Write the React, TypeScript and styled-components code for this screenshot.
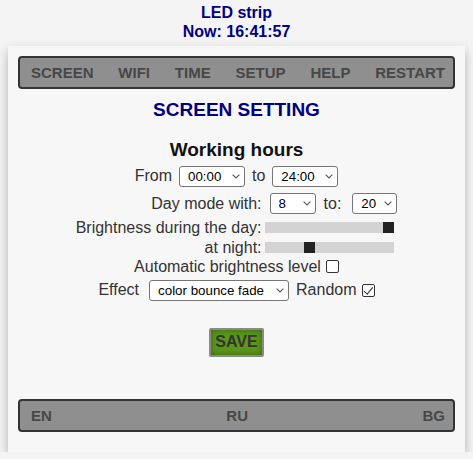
import styled, { createGlobalStyle } from "styled-components";

const GlobalStyle = createGlobalStyle`
  html, body {
    margin: 0;
    background: #f4f4f4;
  }
  body {
    padding: 3px 8px 0;
    font-family: "Liberation Sans", Arial, sans-serif;
    color: #333;
  }
`;

const Header = styled.header`
  text-align: center;
  color: #000080;
  font-weight: bold;
  font-size: 16px;
  line-height: 19px;
  margin-bottom: 5px;
`;

const Card = styled.main`
  background: #f7f7f7;
  box-shadow: 0 5px 10px rgba(0, 0, 0, 0.28);
  padding: 10px 10px 20px;
  display: flex;
  flex-direction: column;
  align-items: stretch;
`;

const Bar = styled.nav`
  display: flex;
  justify-content: space-between;
  align-items: center;
  height: 33px;
  box-sizing: border-box;
  padding: 0 8px 0 11px;
  background: #8f8f8f;
  border: 2px solid #333;
  border-radius: 4px;
`;

const BarItem = styled.a`
  font-size: 15px;
  font-weight: bold;
  color: #474747;
  text-decoration: none;
`;

const PageTitle = styled.h2`
  margin: 10px 0 0;
  text-align: center;
  font-size: 19px;
  line-height: 22px;
  color: #000080;
`;

const SectionTitle = styled.h3`
  margin: 18px 0 0;
  text-align: center;
  font-size: 19px;
  line-height: 22px;
  color: #111;
`;

const Row = styled.div<{ $h: number }>`
  display: flex;
  justify-content: center;
  align-items: center;
  height: ${(p) => p.$h}px;
  font-size: 16px;
`;

const Text = styled.span<{ $l?: number; $r?: number }>`
  margin-left: ${(p) => p.$l ?? 0}px;
  margin-right: ${(p) => p.$r ?? 0}px;
`;

const Table = styled.div`
  display: grid;
  grid-template-columns: auto auto;
  grid-template-rows: 27px 21px 19px;
  column-gap: 3px;
  justify-content: center;
  margin-top: 2px;
  font-size: 16px;
`;

const Label = styled.span`
  display: flex;
  align-items: center;
  justify-content: flex-end;
`;

const Cell = styled.span<{ $indent?: number }>`
  display: flex;
  align-items: center;
  padding-left: ${(p) => p.$indent ?? 0}px;
`;

const SelectWrap = styled.span<{ $w: number }>`
  position: relative;
  display: inline-flex;
  width: ${(p) => p.$w}px;
  height: 21px;
`;

const NativeSelect = styled.select`
  -webkit-appearance: none;
  appearance: none;
  width: 100%;
  height: 100%;
  box-sizing: border-box;
  padding: 0 0 0 8px;
  margin: 0;
  font-family: "Liberation Sans", Arial, sans-serif;
  font-size: 13.33px;
  color: #000;
  background: #fff;
  border: 1px solid #767676;
  border-radius: 3px;
`;

const Chevron = styled.svg`
  position: absolute;
  right: 5px;
  top: 8px;
  width: 8px;
  height: 5px;
  pointer-events: none;
`;

const Select = ({ w, value }: { w: number; value: string }) => (
  <SelectWrap $w={w}>
    <NativeSelect defaultValue={value}>
      <option>{value}</option>
    </NativeSelect>
    <Chevron viewBox="0 0 8 5">
      <path d="M0.6 0.6 L4 4 L7.4 0.6" fill="none" stroke="#555" strokeWidth="1.1" />
    </Chevron>
  </SelectWrap>
);

const Slider = styled.input.attrs({ type: "range", min: 0, max: 255 })`
  -webkit-appearance: none;
  appearance: none;
  width: 129px;
  height: 11px;
  margin: 0;
  background: #d3d3d3;
  outline: none;
  &::-webkit-slider-thumb {
    -webkit-appearance: none;
    appearance: none;
    width: 11px;
    height: 11px;
    border: none;
    border-radius: 0;
    background: #222;
  }
`;

const Check = styled.input.attrs({ type: "checkbox" })`
  -webkit-appearance: none;
  appearance: none;
  position: relative;
  width: 13px;
  height: 13px;
  margin: 0 0 0 5px;
  box-sizing: border-box;
  border: 1px solid #333;
  border-radius: 2px;
  background: #fff;
  &:checked::after {
    content: "";
    position: absolute;
    left: 3.5px;
    top: 0px;
    width: 3.5px;
    height: 7.5px;
    border: solid #333;
    border-width: 0 1.3px 1.3px 0;
    transform: rotate(40deg);
  }
`;

const SaveButton = styled.button`
  align-self: center;
  margin-top: 24px;
  width: 55px;
  height: 29px;
  box-sizing: border-box;
  padding: 0;
  background: #5b9718;
  border: 2px solid #8a8a8a;
  border-radius: 2px;
  box-shadow: inset 0 0 6px rgba(0, 0, 0, 0.35);
  font-family: "Liberation Sans", Arial, sans-serif;
  font-size: 16px;
  font-weight: bold;
  color: #333;
`;

const Footer = styled(Bar)`
  margin-top: 42px;
`;

const menu = ["SCREEN", "WIFI", "TIME", "SETUP", "HELP", "RESTART"];
const langs = ["EN", "RU", "BG"];

export default function App() {
  return (
    <>
      <GlobalStyle />
      <Header>
        LED strip
        <br />
        Now: 16:41:57
      </Header>
      <Card>
        <Bar>
          {menu.map((m) => (
            <BarItem key={m} href="#">
              {m}
            </BarItem>
          ))}
        </Bar>
        <PageTitle>SCREEN SETTING</PageTitle>
        <SectionTitle>Working hours</SectionTitle>
        <Row $h={24} style={{ marginTop: 3 }}>
          <Text $r={7}>From</Text>
          <Select w={66} value="00:00" />
          <Text $l={7} $r={7}>to</Text>
          <Select w={66} value="24:00" />
        </Row>
        <Table>
          <Label>Day mode with:</Label>
          <Cell $indent={5}>
            <Select w={46} value="8" />
            <Text $l={8} $r={11}>to:</Text>
            <Select w={45} value="20" />
          </Cell>
          <Label>Brightness during the day:</Label>
          <Cell>
            <Slider defaultValue={255} />
          </Cell>
          <Label>at night:</Label>
          <Cell>
            <Slider defaultValue={85} />
          </Cell>
        </Table>
        <Row $h={19.5}>
          <Text>Automatic brightness level</Text>
          <Check />
        </Row>
        <Row $h={27}>
          <Text $r={10}>Effect</Text>
          <Select w={140} value="color bounce fade" />
          <Text $l={7}>Random</Text>
          <Check defaultChecked />
        </Row>
        <SaveButton>SAVE</SaveButton>
        <Footer>
          {langs.map((l) => (
            <BarItem key={l} href="#">
              {l}
            </BarItem>
          ))}
        </Footer>
      </Card>
    </>
  );
}
